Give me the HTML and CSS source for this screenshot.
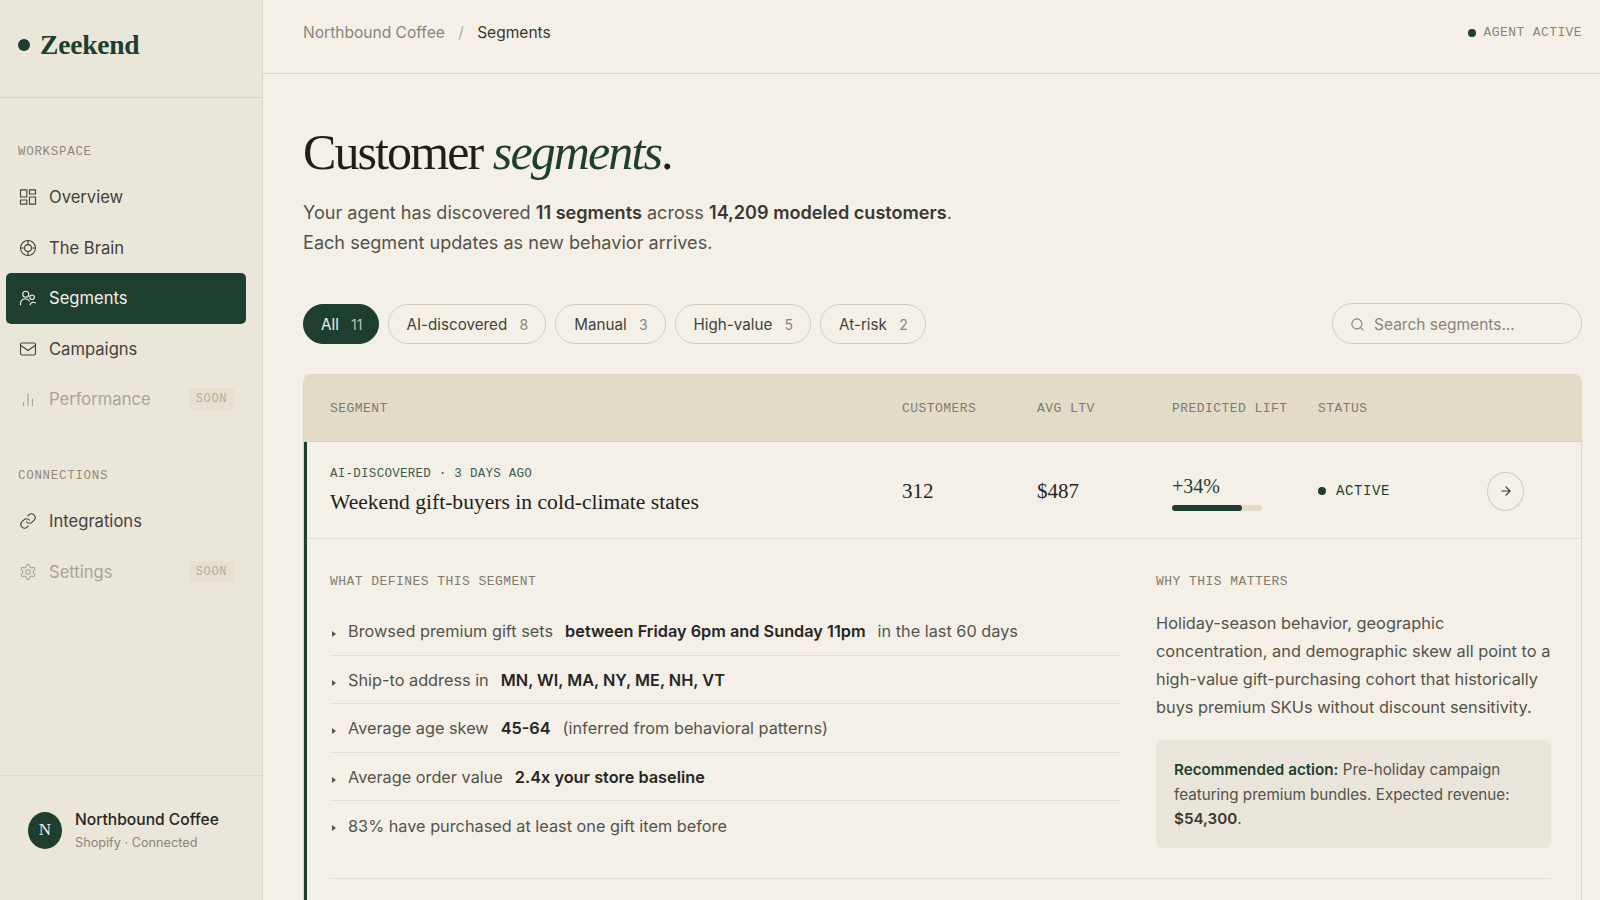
FILE: index.html
```html
<!DOCTYPE html>
<html lang="en">
<head>
  <meta charset="UTF-8" />
  <meta name="viewport" content="width=device-width, initial-scale=1.0"/>
  <title>Zeekend | Segments</title>
  <link rel="stylesheet" href="styles.css">
</head>
<body>
  <aside class="sidebar">
    <div class="brand"><span class="brand-dot"></span>Zeekend</div>

    <div class="nav-label">WORKSPACE</div>
    <nav class="nav">
      <a class="nav-item">
        <svg class="icon" viewBox="0 0 24 24"><rect x="2" y="2.500" width="8.500" height="9.500"/><rect x="14" y="2.500" width="8" height="5.500"/><rect x="14" y="12" width="8" height="9.500"/><rect x="2" y="16" width="8.500" height="5.500"/></svg>
        Overview
      </a>
      <a class="nav-item">
        <svg class="icon" viewBox="0 0 24 24"><circle cx="12" cy="12" r="10"/><circle cx="12" cy="12" r="4.500"/><path d="M12 2v5.500M12 16.500V22M2 12h5.500M16.500 12H22"/></svg>
        The Brain
      </a>
      <a class="nav-item active">
        <svg class="icon" viewBox="0 0 24 24"><circle cx="9" cy="7" r="4"/><circle cx="17.500" cy="11" r="3"/><path d="M2 21v-1.500a6.500 6.500 0 0 1 12-3.400M15 21v-1a5 5 0 0 1 7-1.500"/></svg>
        Segments
      </a>
      <a class="nav-item">
        <svg class="icon" viewBox="0 0 24 24"><rect x="2" y="4" width="20" height="16" rx="2"/><path d="M2 7l10 7 10-7"/></svg>
        Campaigns
      </a>
      <a class="nav-item muted">
        <svg class="icon" viewBox="0 0 24 24"><path d="M6 21v-4M12 21V5M18 21v-9"/></svg>
        Performance
        <span class="soon">SOON</span>
      </a>
    </nav>

    <div class="nav-label second">CONNECTIONS</div>
    <nav class="nav">
      <a class="nav-item">
        <svg class="icon" viewBox="0 0 24 24"><path d="M10 13a5 5 0 0 0 7.500.500l3-3a5 5 0 0 0-7-7l-1.700 1.700"/><path d="M14 11a5 5 0 0 0-7.500-.500l-3 3a5 5 0 0 0 7 7l1.700-1.700"/></svg>
        Integrations
      </a>
      <a class="nav-item muted">
        <svg class="icon" viewBox="0 0 24 24"><path d="M12.200 2h-.400a2 2 0 0 0-2 2v.200a2 2 0 0 1-1 1.700l-.400.300a2 2 0 0 1-2 0l-.200-.100a2 2 0 0 0-2.700.700l-.200.400a2 2 0 0 0 .700 2.700l.200.100a2 2 0 0 1 1 1.700v.500a2 2 0 0 1-1 1.700l-.200.100a2 2 0 0 0-.700 2.700l.200.400a2 2 0 0 0 2.700.700l.200-.100a2 2 0 0 1 2 0l.400.300a2 2 0 0 1 1 1.700v.200a2 2 0 0 0 2 2h.400a2 2 0 0 0 2-2v-.200a2 2 0 0 1 1-1.700l.400-.300a2 2 0 0 1 2 0l.200.100a2 2 0 0 0 2.700-.700l.200-.400a2 2 0 0 0-.700-2.700l-.200-.100a2 2 0 0 1-1-1.700v-.500a2 2 0 0 1 1-1.700l.200-.100a2 2 0 0 0 .700-2.700l-.200-.400a2 2 0 0 0-2.700-.700l-.200.100a2 2 0 0 1-2 0l-.400-.300a2 2 0 0 1-1-1.700V4a2 2 0 0 0-2-2z"/><circle cx="12" cy="12" r="3"/></svg>
        Settings
        <span class="soon">SOON</span>
      </a>
    </nav>

    <div class="account">
      <div class="avatar">N</div>
      <div>
        <div class="account-name">Northbound Coffee</div>
        <div class="account-sub">Shopify · Connected</div>
      </div>
    </div>
  </aside>

  <main class="main">
    <header class="topbar">
      <div class="crumbs">
        <span class="crumb">Northbound Coffee</span>
        <span class="crumb-sep">/</span>
        <span class="crumb-current">Segments</span>
      </div>
      <div class="agent"><span class="dot"></span>AGENT ACTIVE</div>
    </header>

    <section class="content">
      <h1 class="title">Customer <em>segments</em>.</h1>
      <p class="intro">Your agent has discovered <b>11 segments</b> across <b>14,209 modeled customers</b>.<br>Each segment updates as new behavior arrives.</p>

      <div class="filters">
        <button class="chip on">All <span>11</span></button>
        <button class="chip">AI-discovered <span>8</span></button>
        <button class="chip">Manual <span>3</span></button>
        <button class="chip">High-value <span>5</span></button>
        <button class="chip">At-risk <span>2</span></button>
        <div class="search">
          <svg class="search-icon" viewBox="0 0 24 24"><circle cx="11" cy="11" r="8"/><path d="M21 21l-4.300-4.300"/></svg>
          Search segments...
        </div>
      </div>

      <div class="table">
        <div class="row head">
          <div>SEGMENT</div>
          <div>CUSTOMERS</div>
          <div>AVG LTV</div>
          <div>PREDICTED LIFT</div>
          <div>STATUS</div>
        </div>

        <div class="open">
          <div class="row seg">
            <div>
              <div class="seg-meta">AI-DISCOVERED · 3 DAYS AGO</div>
              <div class="seg-name">Weekend gift-buyers in cold-climate states</div>
            </div>
            <div class="num">312</div>
            <div class="num">$487</div>
            <div>
              <div class="lift">+34%</div>
              <div class="bar"><div class="bar-fill" style="width:78%"></div></div>
            </div>
            <div class="status"><span class="dot"></span>ACTIVE</div>
            <div class="arrow">
              <svg viewBox="0 0 24 24"><path d="M5 12h14M12 5l7 7-7 7"/></svg>
            </div>
          </div>

          <div class="detail">
            <div class="detail-cols">
              <div>
                <div class="detail-label">WHAT DEFINES THIS SEGMENT</div>
                <ul class="rules">
                  <li>Browsed premium gift sets <b>between Friday 6pm and Sunday 11pm</b> in the last 60 days</li>
                  <li>Ship-to address in <b>MN, WI, MA, NY, ME, NH, VT</b></li>
                  <li>Average age skew <b>45-64</b> (inferred from behavioral patterns)</li>
                  <li>Average order value <b>2.4x your store baseline</b></li>
                  <li>83% have purchased at least one gift item before</li>
                </ul>
              </div>
              <div>
                <div class="detail-label">WHY THIS MATTERS</div>
                <p class="why">Holiday-season behavior, geographic concentration, and demographic skew all point to a high-value gift-purchasing cohort that historically buys premium SKUs without discount sensitivity.</p>
                <div class="action"><strong>Recommended action:</strong> Pre-holiday campaign featuring premium bundles. Expected revenue: <b>$54,300</b>.</div>
              </div>
            </div>
          </div>
        </div>
      </div>
    </section>
  </main>
</body>
</html>
```

FILE: styles.css
```css
* {
  box-sizing: border-box;
}
body {
  margin: 0;
  height: 100vh;
  display: flex;
  overflow: hidden;
  background-color: #f4f0e8;
  color: #1f1e1a;
  font-family: Inter, "Noto Sans", sans-serif;
}
.sidebar {
  width: 263px;
  flex-shrink: 0;
  display: flex;
  flex-direction: column;
  background-color: #ebe6da;
  border-right: 1px solid #ded8ca;
}
.brand {
  height: 98px;
  flex-shrink: 0;
  display: flex;
  align-items: center;
  gap: 10px;
  padding: 0 18px 8px;
  border-bottom: 1px solid #d9d3c5;
  font-family: "Liberation Serif", serif;
  font-size: 27.500px;
  font-weight: 700;
  letter-spacing: -0.2px;
  color: #1e3f2f;
}
.brand-dot {
  width: 12px;
  height: 12px;
  border-radius: 50%;
  background-color: #1e3f2f;
}
.nav-label {
  margin: 47px 0 12.500px 18px;
  font-family: "Liberation Mono", monospace;
  font-size: 12.500px;
  letter-spacing: 0.7px;
  color: #8f8a7c;
}
.nav-label.second {
  margin-top: 45px;
}
.nav {
  padding-left: 6px;
  padding-right: 16px;
}
.nav-item {
  height: 51px;
  margin-bottom: -0.5px;
  display: flex;
  align-items: center;
  gap: 12px;
  padding: 0 12px 0 13px;
  border-radius: 5px;
  font-size: 16.600px;
  color: #44423a;
}
.nav-item.active {
  background-color: #1e3f2f;
  color: #f4f0e8;
}
.nav-item.muted {
  color: #a9a496;
}
.icon {
  width: 18px;
  height: 18px;
  flex-shrink: 0;
  fill: none;
  stroke: currentColor;
  stroke-width: 1.5;
  stroke-linecap: round;
  stroke-linejoin: round;
}
.soon {
  margin-left: auto;
  padding: 4px 7px;
  border-radius: 3px;
  background-color: #e6e0d2;
  font-family: "Liberation Mono", monospace;
  font-size: 12px;
  letter-spacing: 0.6px;
  color: #b3ae9f;
}
.account {
  margin-top: auto;
  height: 125px;
  display: flex;
  align-items: center;
  gap: 13px;
  padding: 0 28px 16px;
  border-top: 1px solid #ded8ca;
}
.avatar {
  width: 34px;
  height: 37px;
  flex-shrink: 0;
  display: flex;
  align-items: center;
  justify-content: center;
  border-radius: 50%;
  background-color: #1e3f2f;
  color: #f4f0e8;
  font-family: "Liberation Serif", serif;
  font-size: 17px;
}
.account-name {
  font-size: 15.600px;
  font-weight: 500;
  color: #26251f;
}
.account-sub {
  margin-top: 6px;
  font-size: 12.700px;
  color: #8a8578;
}
.main {
  flex: 1;
  min-width: 0;
}
.topbar {
  height: 74px;
  display: flex;
  align-items: center;
  justify-content: space-between;
  padding: 0 18px 8px 40px;
  border-bottom: 1px solid #e0dacc;
}
.crumbs {
  font-size: 15.550px;
  color: #8a8578;
}
.crumb-sep {
  margin: 0 9px;
  color: #b3ae9f;
}
.crumb-current {
  color: #3a3830;
}
.agent {
  display: flex;
  align-items: center;
  gap: 8px;
  font-family: "Liberation Mono", monospace;
  font-size: 13px;
  letter-spacing: 0.4px;
  color: #8a8578;
}
.dot {
  width: 8px;
  height: 8px;
  border-radius: 50%;
  background-color: #1e3f2f;
}
.content {
  padding: 47px 18px 0 40px;
}
.title {
  margin: 0;
  font-family: "Liberation Serif", serif;
  font-size: 50px;
  font-weight: 400;
  line-height: 62px;
  letter-spacing: -1.900px;
  color: #1f1e1a;
}
.title em {
  color: #1e3f2f;
}
.intro {
  margin: 15px 0 0;
  font-size: 18.100px;
  line-height: 29.500px;
  color: #55534a;
}
.intro b {
  font-weight: 600;
  color: #3a3830;
}
.filters {
  margin-top: 46px;
  display: flex;
  align-items: center;
  gap: 9px;
}
.chip {
  height: 40px;
  padding: 2px 17px 0 18px;
  border: 1px solid #d3cdbf;
  border-radius: 20px;
  background: none;
  font-family: inherit;
  font-size: 15.200px;
  color: #44423a;
}
.chip span {
  margin-left: 8px;
  font-size: 14px;
  color: #8a8578;
}
.chip.on {
  padding: 2px 15px 0 17px;
  background-color: #1e3f2f;
  border-color: #1e3f2f;
  color: #f4f0e8;
}
.chip.on span {
  color: #b6c1b5;
}
.search {
  width: 250px;
  height: 41px;
  margin-left: auto;
  display: flex;
  align-items: center;
  gap: 9px;
  padding: 2px 0 0 17px;
  border: 1px solid #d3cdbf;
  border-radius: 21px;
  font-size: 15.500px;
  color: #8a8578;
}
.search-icon {
  width: 15px;
  height: 15px;
  fill: none;
  stroke: currentColor;
  stroke-width: 1.8;
  stroke-linecap: round;
}
.table {
  margin-top: 30px;
  border: 1px solid #e0dacc;
  border-bottom: none;
  border-radius: 8px 8px 0 0;
}
.row {
  display: grid;
  grid-template-columns: 572px 135px 135px 146px 169px 37px;
  align-items: center;
  padding-left: 26px;
}
.head {
  height: 67px;
  padding-top: 1px;
  border-radius: 7px 7px 0 0;
  border-bottom: 1px solid #d6d0c0;
  background-color: #e2dbc8;
  font-family: "Liberation Mono", monospace;
  font-size: 13px;
  letter-spacing: 0.45px;
  color: #807b6c;
}
.open {
  border-left: 3px solid #1e3f2f;
}
.seg {
  height: 97px;
  padding-top: 2px;
  padding-left: 23px;
  border-bottom: 1px solid #e4dfd2;
}
.seg-meta {
  font-family: "Liberation Mono", monospace;
  font-size: 12.500px;
  letter-spacing: 0.27px;
  color: #3d5c4b;
}
.seg-name {
  margin-top: 8.500px;
  font-family: "Liberation Serif", serif;
  font-size: 21.600px;
  color: #1f1e1a;
}
.num {
  font-family: "Liberation Serif", serif;
  font-size: 21px;
  color: #26251f;
}
.lift {
  margin-top: 4px;
  font-family: "Liberation Serif", serif;
  font-size: 20px;
  color: #1e3f2f;
}
.bar {
  width: 90px;
  height: 6px;
  margin-top: 7px;
  border-radius: 3px;
  background-color: #e2dbc8;
}
.bar-fill {
  height: 100%;
  border-radius: 3px;
  background-color: #1e3f2f;
}
.status {
  display: flex;
  align-items: center;
  gap: 10px;
  font-family: "Liberation Mono", monospace;
  font-size: 14px;
  letter-spacing: 0.6px;
  color: #1e3f2f;
}
.arrow {
  width: 37px;
  height: 39px;
  display: flex;
  align-items: center;
  justify-content: center;
  border: 1px solid #d3cdbf;
  border-radius: 50%;
}
.arrow svg {
  width: 14px;
  height: 14px;
  fill: none;
  stroke: #3a3830;
  stroke-width: 2;
  stroke-linecap: round;
  stroke-linejoin: round;
}
.detail {
  padding: 35px 30px 60px 23px;
}
.detail-cols {
  height: 305px;
  display: grid;
  grid-template-columns: 790px 1fr;
  column-gap: 36px;
  border-bottom: 1px solid #e4dfd2;
}
.detail-label {
  font-family: "Liberation Mono", monospace;
  font-size: 13px;
  letter-spacing: 0.45px;
  color: #807b6c;
}
.rules {
  margin: 18px 0 0;
  padding: 0;
  list-style: none;
}
.rules li {
  position: relative;
  height: 48.500px;
  display: flex;
  align-items: center;
  gap: 12px;
  padding-top: 1px;
  padding-left: 18px;
  border-bottom: 1px solid #e4dfd2;
  font-size: 16.300px;
  color: #55534a;
  white-space: nowrap;
}
.rules li:last-child {
  border-bottom: none;
}
.rules li::before {
  content: "";
  position: absolute;
  left: 2px;
  top: 24px;
  border-left: 4.500px solid #55534a;
  border-top: 3.500px solid transparent;
  border-bottom: 3.500px solid transparent;
}
.rules b {
  font-weight: 600;
  color: #26251f;
}
.why {
  margin: 19.500px 0 0;
  font-size: 16.350px;
  line-height: 28.200px;
  color: #55534a;
}
.action {
  margin-top: 19px;
  padding: 18px 18px 16px;
  border-radius: 6px;
  background-color: #eae5da;
  font-size: 15.200px;
  line-height: 24.500px;
  color: #55534a;
}
.action strong {
  font-weight: 600;
  color: #1e3f2f;
}
.action b {
  font-weight: 600;
  color: #3a3830;
}
```
